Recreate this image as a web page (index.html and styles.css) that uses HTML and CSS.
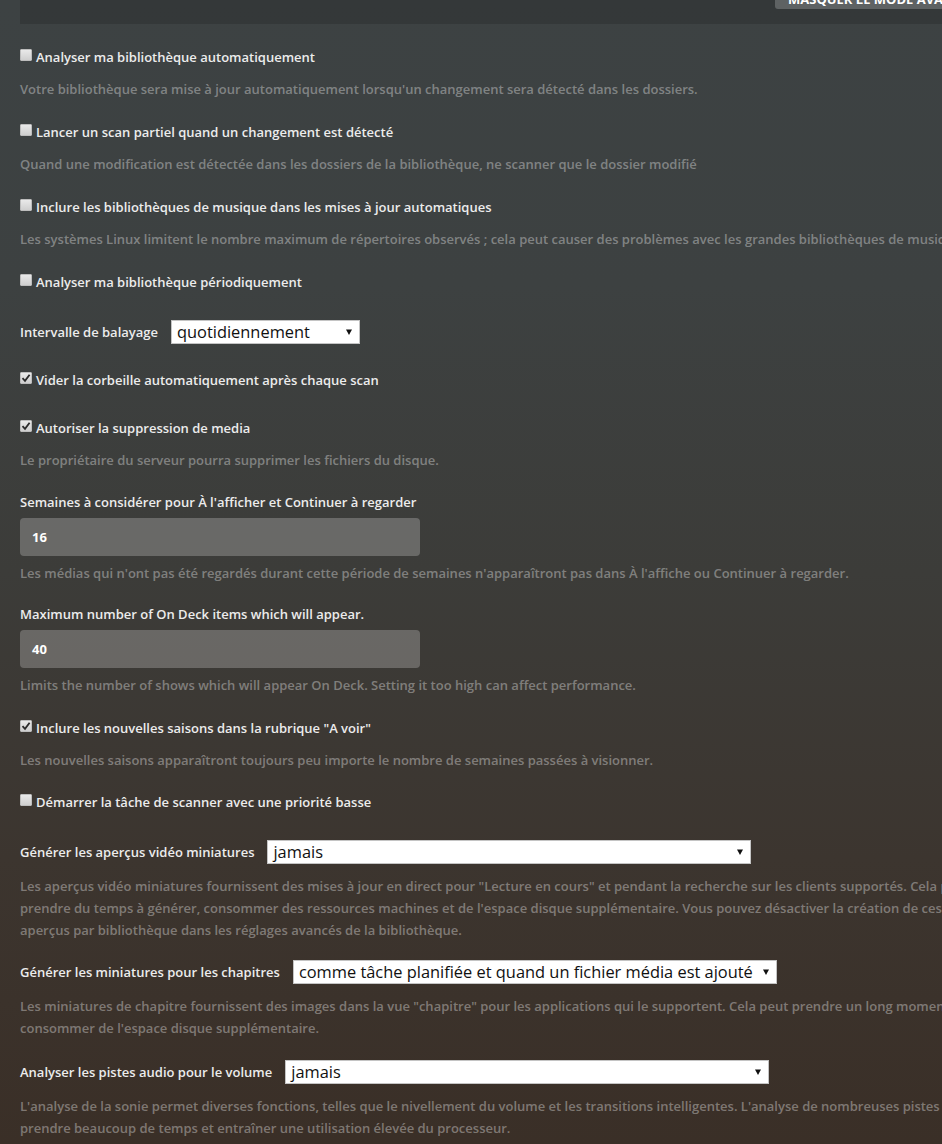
FILE: index.html
```html
<!DOCTYPE html>
<html lang="fr">
<head>
<meta charset="utf-8">
<title>Paramètres de la bibliothèque</title>
<link rel="stylesheet" href="styles.css">
</head>
<body>
<div class="page">
  <div class="topbar">
    <button class="adv-btn" type="button">MASQUER LE MODE AVANCÉ</button>
  </div>

  <div class="settings">
    <div class="group loose">
      <label class="check"><span class="box"></span>Analyser ma bibliothèque automatiquement</label>
      <p class="desc">Votre bibliothèque sera mise à jour automatiquement lorsqu'un changement sera détecté dans les dossiers.</p>
    </div>

    <div class="group loose">
      <label class="check"><span class="box"></span>Lancer un scan partiel quand un changement est détecté</label>
      <p class="desc">Quand une modification est détectée dans les dossiers de la bibliothèque, ne scanner que le dossier modifié</p>
    </div>

    <div class="group loose">
      <label class="check"><span class="box"></span>Inclure les bibliothèques de musique dans les mises à jour automatiques</label>
      <p class="desc nowrap">Les systèmes Linux limitent le nombre maximum de répertoires observés ; cela peut causer des problèmes avec les grandes bibliothèques de musique.</p>
    </div>

    <div class="group plain">
      <label class="check"><span class="box"></span>Analyser ma bibliothèque périodiquement</label>
    </div>

    <div class="group select-group plain-select">
      <div class="select-row">
        <span class="field-label">Intervalle de balayage</span>
        <div class="select select-auto"><span class="select-value">quotidiennement</span><svg class="arrow" viewBox="0 0 6 6" width="6" height="6"><path d="M0 0.5 H6 L3 6 Z" fill="#111"/></svg></div>
      </div>
    </div>

    <div class="group plain">
      <label class="check"><span class="box checked"><svg viewBox="0 0 10 10" width="10" height="10"><path d="M1.5 5.2 L4 7.8 L8.6 1.8" fill="none" stroke="#2a2a2a" stroke-width="1.8"/></svg></span>Vider la corbeille automatiquement après chaque scan</label>
    </div>

    <div class="group">
      <label class="check"><span class="box checked"><svg viewBox="0 0 10 10" width="10" height="10"><path d="M1.5 5.2 L4 7.8 L8.6 1.8" fill="none" stroke="#2a2a2a" stroke-width="1.8"/></svg></span>Autoriser la suppression de media</label>
      <p class="desc">Le propriétaire du serveur pourra supprimer les fichiers du disque.</p>
    </div>

    <div class="group input-group input-first">
      <span class="field-label">Semaines à considérer pour À l'afficher et Continuer à regarder</span>
      <div class="text-input">16</div>
      <p class="desc">Les médias qui n'ont pas été regardés durant cette période de semaines n'apparaîtront pas dans À l'affiche ou Continuer à regarder.</p>
    </div>

    <div class="group input-group input-second">
      <span class="field-label">Maximum number of On Deck items which will appear.</span>
      <div class="text-input">40</div>
      <p class="desc">Limits the number of shows which will appear On Deck. Setting it too high can affect performance.</p>
    </div>

    <div class="group">
      <label class="check"><span class="box checked"><svg viewBox="0 0 10 10" width="10" height="10"><path d="M1.5 5.2 L4 7.8 L8.6 1.8" fill="none" stroke="#2a2a2a" stroke-width="1.8"/></svg></span>Inclure les nouvelles saisons dans la rubrique "A voir"</label>
      <p class="desc">Les nouvelles saisons apparaîtront toujours peu importe le nombre de semaines passées à visionner.</p>
    </div>

    <div class="group plain">
      <label class="check"><span class="box"></span>Démarrer la tâche de scanner avec une priorité basse</label>
    </div>

    <div class="group select-group select-first">
      <div class="select-row">
        <span class="field-label">Générer les aperçus vidéo miniatures</span>
        <div class="select select-wide"><span class="select-value">jamais</span><svg class="arrow" viewBox="0 0 6 6" width="6" height="6"><path d="M0 0.5 H6 L3 6 Z" fill="#111"/></svg></div>
      </div>
      <p class="desc">Les aperçus vidéo miniatures fournissent des mises à jour en direct pour "Lecture en cours" et pendant la recherche sur les clients supportés. Cela peut prendre du temps à générer, consommer des ressources machines et de l'espace disque supplémentaire. Vous pouvez désactiver la création de ces aperçus par bibliothèque dans les réglages avancés de la bibliothèque.</p>
    </div>

    <div class="group select-group">
      <div class="select-row">
        <span class="field-label">Générer les miniatures pour les chapitres</span>
        <div class="select select-wide"><span class="select-value">comme tâche planifiée et quand un fichier média est ajouté</span><svg class="arrow" viewBox="0 0 6 6" width="6" height="6"><path d="M0 0.5 H6 L3 6 Z" fill="#111"/></svg></div>
      </div>
      <p class="desc">Les miniatures de chapitre fournissent des images dans la vue "chapitre" pour les applications qui le supportent. Cela peut prendre un long moment et consommer de l'espace disque supplémentaire.</p>
    </div>

    <div class="group select-group">
      <div class="select-row">
        <span class="field-label">Analyser les pistes audio pour le volume</span>
        <div class="select select-wide"><span class="select-value">jamais</span><svg class="arrow" viewBox="0 0 6 6" width="6" height="6"><path d="M0 0.5 H6 L3 6 Z" fill="#111"/></svg></div>
      </div>
      <p class="desc">L'analyse de la sonie permet diverses fonctions, telles que le nivellement du volume et les transitions intelligentes. L'analyse de nombreuses pistes peut prendre beaucoup de temps et entraîner une utilisation élevée du processeur.</p>
    </div>
  </div>
</div>
</body>
</html>
```

FILE: styles.css
```css
html, body {
  margin: 0;
  padding: 0;
}

body {
  width: 942px;
  height: 1144px;
  overflow: hidden;
  font-family: "Open Sans", "Noto Sans", "Liberation Sans", sans-serif;
  font-size: 13px;
  font-weight: 600;
  color: #e8e8e8;
  background: linear-gradient(180deg, #3d4243 0%, #3d4141 25%, #3c3c39 50%, #3c352f 75%, #3a2f27 100%);
}

.page {
  width: 1000px;
  padding-left: 20px;
}

.topbar {
  height: 24px;
  background: rgba(0, 0, 0, 0.14);
  padding-left: 755px;
  overflow: hidden;
}

.adv-btn {
  display: block;
  height: 30px;
  margin-top: -21px;
  padding: 10px 14px 0 13px;
  box-sizing: border-box;
  border: 0;
  border-radius: 3px;
  background: #5e6263;
  color: #fff;
  font-family: inherit;
  font-size: 13px;
  font-weight: 700;
  line-height: 18px;
  text-align: left;
  white-space: nowrap;
}

.settings {
  width: 960px;
  padding-top: 23px;
}

.group {
  margin-bottom: 21px;
}

.group.loose {
  margin-bottom: 22px;
}

.group.plain {
  margin-bottom: 28px;
}

.group.plain-select {
  margin-bottom: 26px;
}

.group.input-first {
  margin-bottom: 20px;
}

.group.input-second {
  margin-bottom: 22px;
}

.check {
  display: flex;
  align-items: center;
  height: 20px;
  line-height: 20px;
  color: #ececec;
}

.box {
  width: 12px;
  height: 12px;
  margin-right: 4px;
  margin-top: -4px;
  flex: none;
  background: linear-gradient(180deg, #e9e9e9, #cfcfcf);
  border: 1px solid #bdbdbd;
  box-sizing: border-box;
  border-radius: 1px;
  display: flex;
  align-items: center;
  justify-content: center;
}

.box svg {
  display: block;
}

.desc {
  margin: 11px 0 0;
  line-height: 22px;
  color: rgba(255, 255, 255, 0.36);
}

.desc.nowrap {
  white-space: nowrap;
}

.field-label {
  display: block;
  line-height: 20px;
  color: #ececec;
}

.input-group .text-input {
  margin-top: 6px;
  width: 400px;
  height: 38px;
  box-sizing: border-box;
  padding-left: 12px;
  border-radius: 4px;
  background: rgba(255, 255, 255, 0.23);
  color: #fff;
  font-weight: 700;
  line-height: 38px;
}

.input-group .desc {
  margin-top: 6px;
}

.select-row {
  display: flex;
  align-items: center;
  gap: 13px;
  height: 24px;
}

.select-row .field-label {
  white-space: nowrap;
}

.select {
  height: 24px;
  box-sizing: border-box;
  display: flex;
  align-items: center;
  justify-content: space-between;
  background: #fff;
  border: 1px solid #c4c4c4;
  padding: 0 7px 0 5px;
  color: #111;
  font-size: 16.4px;
  font-weight: 400;
  white-space: nowrap;
}

.select-auto {
  width: 189px;
}

.select-wide {
  width: 484px;
}

.select-value {
  line-height: 22px;
}

.arrow {
  display: block;
  flex: none;
  margin-left: 6px;
}

.select-group {
  margin-bottom: 21px;
}

.select-group .desc {
  margin-top: 11px;
}

.select-group.select-first {
  margin-bottom: 19px;
}
```
